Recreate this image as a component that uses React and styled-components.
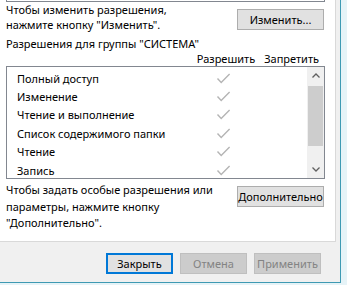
import React from "react";
import styled, { createGlobalStyle } from "styled-components";

const GlobalStyle = createGlobalStyle`
  * { box-sizing: border-box; }
  html, body { margin: 0; padding: 0; }
  body {
    width: 347px;
    height: 285px;
    overflow: hidden;
    background: #e6f3f7;
    font-family: "Noto Sans", "Open Sans", sans-serif;
    font-size: 11px;
    color: #000;
  }
`;

const perms = [
  "Полный доступ",
  "Изменение",
  "Чтение и выполнение",
  "Список содержимого папки",
  "Чтение",
  "Запись",
];

const Frame = styled.div`
  width: 341px;
  height: 283px;
  background: #f0f0f0;
  border-right: 1px solid #3e9ab3;
  border-bottom: 1px solid #3e9ab3;
  display: flex;
  flex-direction: column;
`;

const Panel = styled.div`
  width: 336px;
  height: 242px;
  background: #fff;
  border-right: 1px solid #d9d9d9;
  border-bottom: 1px solid #d9d9d9;
  padding: 0 10px 0 6px;
  display: flex;
  flex-direction: column;
`;

// нижний край списка групп, который остался за кадром
const PrevBox = styled.div`
  height: 2px;
  border: 1px solid #828790;
  border-top: none;
`;

const InfoRow = styled.div`
  display: flex;
  justify-content: space-between;
  align-items: flex-start;
  margin-top: ${(p) => p.$top}px;
`;

const Text = styled.div`
  line-height: ${(p) => p.$lh || 15}px;
  white-space: nowrap;
`;

const Button = styled.div`
  width: ${(p) => p.$w}px;
  height: 21px;
  margin-top: ${(p) => p.$top || 0}px;
  margin-right: ${(p) => p.$right || 0}px;
  display: flex;
  align-items: center;
  justify-content: center;
  background: ${(p) => (p.$disabled ? "#cccccc" : "#e1e1e1")};
  border: ${(p) =>
    p.$focused
      ? "2px solid #0078d7"
      : p.$disabled
      ? "1px solid #bfbfbf"
      : "1px solid #adadad"};
  color: ${(p) => (p.$disabled ? "#838383" : "#000")};
  white-space: nowrap;
`;

const GroupLabel = styled(Text)`
  margin-top: 4px;
`;

const ColumnHeads = styled.div`
  display: flex;
  justify-content: flex-end;
  gap: 9px;
  padding-right: 6px;
  line-height: 15px;
`;

const ListBox = styled.div`
  height: 113px;
  border: 1px solid #828790;
  display: flex;
`;

const Rows = styled.div`
  flex: 1;
  padding-top: 2px;
`;

const Row = styled.div`
  display: flex;
  align-items: center;
  height: 18.4px;
`;

const RowName = styled.div`
  flex: 1;
  padding-left: 10px;
  white-space: nowrap;
`;

const Cell = styled.div`
  width: ${(p) => p.$w}px;
  display: flex;
  justify-content: center;
`;

const ScrollBar = styled.div`
  width: 17px;
  background: #f0f0f0;
  display: flex;
  flex-direction: column;
`;

const Arrow = styled.div`
  height: 17px;
  display: flex;
  align-items: center;
  justify-content: center;
`;

const Track = styled.div`
  flex: 1;
  padding-top: 2px;
`;

const Thumb = styled.div`
  height: 60px;
  margin: 0 1px;
  background: #cdcdcd;
`;

const Footer = styled.div`
  display: flex;
  justify-content: flex-end;
  gap: 7px;
  padding: 11px 19px 0 0;
`;

const Check = () => (
  <svg width="15" height="11" viewBox="0 0 15 11">
    <path
      d="M1.5 5.5 L5.2 9.4 L13.6 1"
      fill="none"
      stroke="#b4b4b4"
      strokeWidth="1.4"
    />
  </svg>
);

const Chevron = ({ down }) => (
  <svg width="8" height="5" viewBox="0 0 8 5">
    <path
      d={down ? "M0.5 0.5 L4 4 L7.5 0.5" : "M0.5 4.5 L4 1 L7.5 4.5"}
      fill="none"
      stroke="#606060"
      strokeWidth="1.3"
    />
  </svg>
);

export default function App() {
  return (
    <>
      <GlobalStyle />
      <Frame>
        <Panel>
          <PrevBox />
          <InfoRow $top={0}>
            <Text>
              Чтобы изменить разрешения,
              <br />
              нажмите кнопку "Изменить".
            </Text>
            <Button $w={87} $top={7} $right={1}>
              Изменить...
            </Button>
          </InfoRow>
          <GroupLabel>Разрешения для группы "СИСТЕМА"</GroupLabel>
          <ColumnHeads>
            <span>Разрешить</span>
            <span>Запретить</span>
          </ColumnHeads>
          <ListBox>
            <Rows>
              {perms.map((name) => (
                <Row key={name}>
                  <RowName>{name}</RowName>
                  <Cell $w={68}>
                    <Check />
                  </Cell>
                  <Cell $w={50} />
                </Row>
              ))}
            </Rows>
            <ScrollBar>
              <Arrow>
                <Chevron />
              </Arrow>
              <Track>
                <Thumb />
              </Track>
              <Arrow>
                <Chevron down />
              </Arrow>
            </ScrollBar>
          </ListBox>
          <InfoRow $top={3}>
            <Text $lh={16.5}>
              Чтобы задать особые разрешения или
              <br />
              параметры, нажмите кнопку
              <br />
              "Дополнительно".
            </Text>
            <Button $w={87} $top={4} $right={1}>
              Дополнительно
            </Button>
          </InfoRow>
        </Panel>
        <Footer>
          <Button $w={67} $focused>
            Закрыть
          </Button>
          <Button $w={67} $disabled>
            Отмена
          </Button>
          <Button $w={67} $disabled>
            Применить
          </Button>
        </Footer>
      </Frame>
    </>
  );
}
